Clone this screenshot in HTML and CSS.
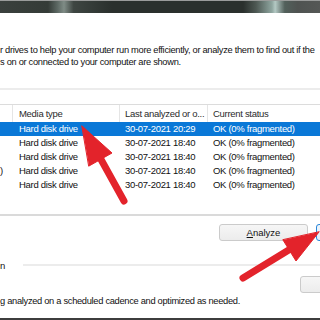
FILE: index.html
```html
<!DOCTYPE html>
<html lang="en">
<head>
    <meta charset="UTF-8">
    <title>Optimize Drives</title>
    <link rel="stylesheet" href="styles.css">
</head>
<body>
    <div class="wallpaper"></div>

    <div class="dialog">
        <p class="intro">r drives to help your computer run more efficiently, or analyze them to find out if the<br>s on or connected to your computer are shown.</p>
        <div class="rule"></div>

        <!-- drive list -->
        <div class="list">
            <div class="row head">
                <span class="c1"></span>
                <span class="c2">Media type</span>
                <span class="c3">Last analyzed or o...</span>
                <span class="c4">Current status</span>
            </div>
            <div class="row selected">
                <span class="c1"></span>
                <span class="c2">Hard disk drive</span>
                <span class="c3">30-07-2021 20:29</span>
                <span class="c4">OK (0% fragmented)</span>
            </div>
            <div class="row">
                <span class="c1"></span>
                <span class="c2">Hard disk drive</span>
                <span class="c3">30-07-2021 18:40</span>
                <span class="c4">OK (0% fragmented)</span>
            </div>
            <div class="row">
                <span class="c1"></span>
                <span class="c2">Hard disk drive</span>
                <span class="c3">30-07-2021 18:40</span>
                <span class="c4">OK (0% fragmented)</span>
            </div>
            <div class="row">
                <span class="c1">)</span>
                <span class="c2">Hard disk drive</span>
                <span class="c3">30-07-2021 18:40</span>
                <span class="c4">OK (0% fragmented)</span>
            </div>
            <div class="row">
                <span class="c1"></span>
                <span class="c2">Hard disk drive</span>
                <span class="c3">30-07-2021 18:40</span>
                <span class="c4">OK (0% fragmented)</span>
            </div>
        </div>

        <div class="actions">
            <button class="btn"><u>A</u>nalyze</button>
            <button class="btn primary"></button>
        </div>

        <div class="section">
            <span>n</span>
            <div class="line"></div>
        </div>
        <div class="actions small">
            <button class="btn"></button>
        </div>
        <p class="schedule">g analyzed on a scheduled cadence and optimized as needed.</p>

        <div class="edge"></div>
    </div>

    <!-- red annotation arrows -->
    <svg class="arrows" width="320" height="320" viewBox="0 0 320 320">
        <g fill="#e3232b" stroke="#e3232b" stroke-linecap="round" stroke-linejoin="round">
            <line x1="124" y1="201" x2="98" y2="154" stroke-width="7"/>
            <polygon points="82,126 112,153 89,166" stroke-width="1"/>
            <line x1="243" y1="278" x2="292" y2="248" stroke-width="7"/>
            <polygon points="319,232 296,261 283,240" stroke-width="1"/>
        </g>
    </svg>
</body>
</html>
```

FILE: styles.css
```css
body {
    margin: 0;
    width: 320px;
    height: 320px;
    overflow: hidden;
    background: #fff;
    color: #111;
    font-family: "Liberation Sans", Arial, sans-serif;
    font-size: 9.5px;
    letter-spacing: -0.3px;
    display: flex;
    flex-direction: column;
    position: relative;
}

.wallpaper {
    height: 12px;
    flex: none;
    border-top: 1px solid #9a9c9b;
    background: linear-gradient(90deg, #3a403d 0%, #343b37 15%, #5d6964 18%, #7f8c86 20%, #3e4642 23%, #2a302d 35%, #2a302d 76%, #4d5853 80%, #8fa6a0 85%, #b4c9c4 86%, #52605b 89%, #4f5351 93%, #555856 100%);
}

.dialog {
    flex: 1;
    display: flex;
    flex-direction: column;
    width: 405px;
}

.intro,
.schedule {
    font-size: 9.3px;
    line-height: 12px;
    letter-spacing: -0.3px;
    white-space: nowrap;
    width: 320px;
    overflow: hidden;
}

.intro {
    margin: 31px 0 0;
}

.rule {
    height: 2px;
    margin-top: 20px;
    width: 320px;
    background: #ececec;
}

.list {
    margin-top: 14px;
    height: 109px;
    border-top: 1px solid #dcdcdc;
    border-bottom: 2px solid #dadada;
}

.row {
    display: flex;
    height: 14px;
    line-height: 14px;
    white-space: nowrap;
}

.row span {
    flex: none;
    padding-left: 6px;
    box-sizing: border-box;
}

.row .c1 { width: 13px; padding-left: 0; }
.row .c2 { width: 107px; }
.row .c3 { width: 88px; padding-left: 5px; }
.row .c4 { width: 180px; padding-left: 5px; }

.row.head {
    height: 17px;
    line-height: 17px;
    color: #2b2b2b;
}

.row.head span {
    border-right: 1px solid #e5e5e5;
}

.row.selected {
    background: #0a78d7;
    color: #fff;
}

.actions {
    display: flex;
    justify-content: flex-end;
    gap: 8px;
    margin-top: 8px;
}

.btn {
    width: 89px;
    height: 17px;
    padding: 0;
    font: inherit;
    color: #111;
    background: linear-gradient(#f6f6f6, #ececec);
    border: 1px solid #cbcbcb;
    border-radius: 3px;
}

.btn.primary {
    background: linear-gradient(#eef6fd, #e3eefa);
    border-color: #2a86d8;
}

.section {
    display: flex;
    align-items: center;
    margin-top: 18px;
    height: 12px;
    width: 320px;
}

.section .line {
    flex: 1;
    height: 2px;
    margin-left: 18px;
    background: #ececec;
}

.actions.small {
    margin-top: 5px;
}

.actions.small .btn {
    width: 105px;
}

.schedule {
    margin: 2px 0 0;
}

.edge {
    margin-top: auto;
    height: 2px;
    width: 320px;
    background: #3d3d3d;
}

.arrows {
    position: absolute;
    left: 0;
    top: 0;
}
```
